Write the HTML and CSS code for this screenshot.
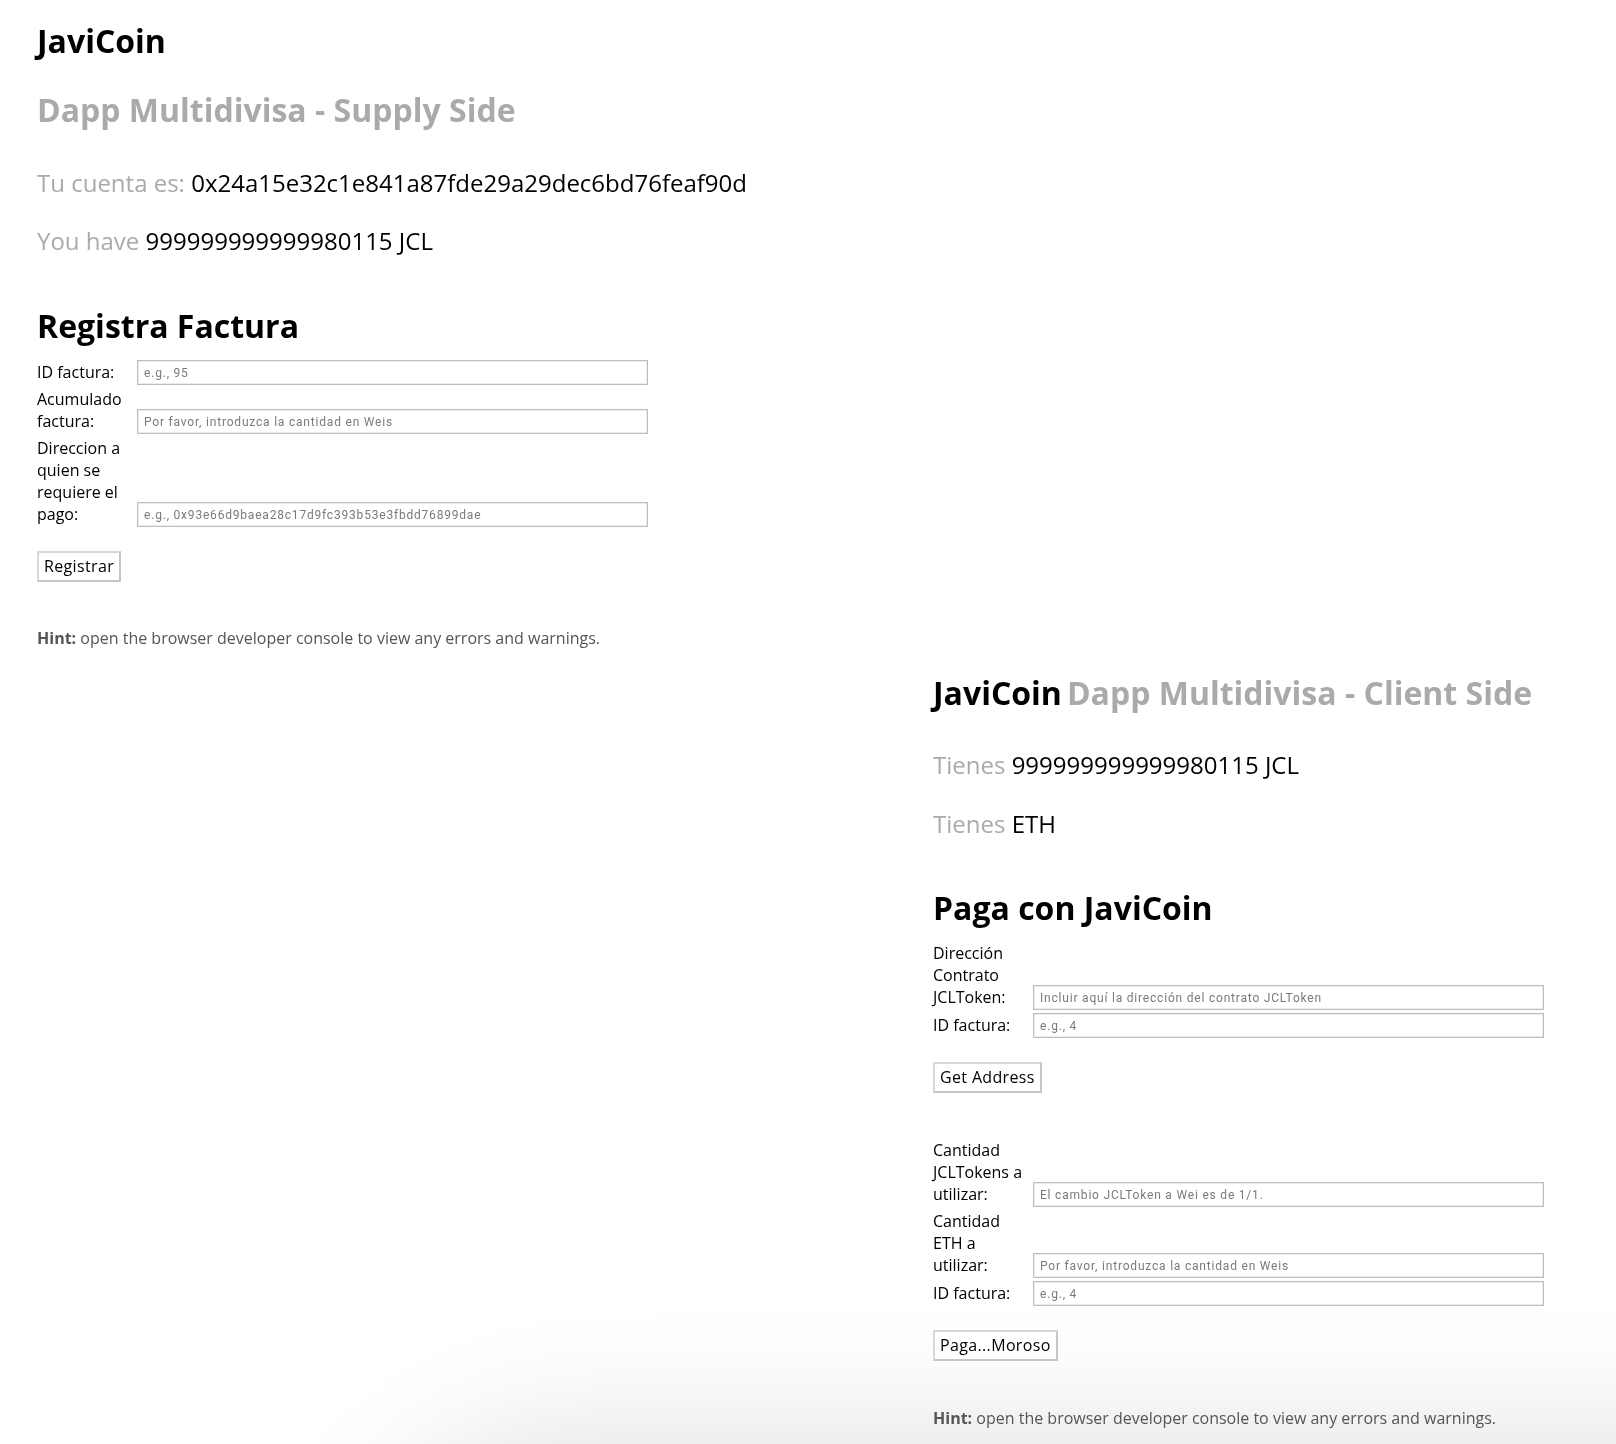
FILE: index.html
```html
<!DOCTYPE html>
<html lang="es">
<head>
<meta charset="utf-8">
<title>JaviCoin</title>
<link rel="stylesheet" href="styles.css">
</head>
<body>
<div class="page">
  <section class="supply">
    <h1 class="brand">JaviCoin</h1>
    <h2 class="subtitle">Dapp Multidivisa - Supply Side</h2>
    <p class="info info-first"><span class="muted">Tu cuenta es:</span> <span>0x24a15e32c1e841a87fde29a29dec6bd76feaf90d</span></p>
    <p class="info info-second"><span class="muted">You have</span> <span>999999999999980115</span> JCL</p>

    <h2 class="section-title">Registra Factura</h2>
    <form class="form-grid">
      <label class="field-label" for="f1">ID factura:</label>
      <input class="field" id="f1" type="text" placeholder="e.g., 95">
      <label class="field-label" for="f2">Acumulado factura:</label>
      <input class="field" id="f2" type="text" placeholder="Por favor, introduzca la cantidad en Weis">
      <label class="field-label" for="f3">Direccion a quien se requiere el pago:</label>
      <input class="field" id="f3" type="text" placeholder="e.g., 0x93e66d9baea28c17d9fc393b53e3fbdd76899dae">
    </form>
    <button class="btn" type="button">Registrar</button>

    <p class="hint"><strong>Hint:</strong> open the browser developer console to view any errors and warnings.</p>
  </section>

  <section class="client">
    <h1 class="brand"><span>JaviCoin</span><span class="brand-sub">Dapp Multidivisa - Client Side</span></h1>
    <p class="info info-first-client"><span class="muted">Tienes</span> <span>999999999999980115</span> JCL</p>
    <p class="info info-client"><span class="muted">Tienes</span> <span></span>ETH</p>

    <h2 class="section-title section-title-client">Paga con JaviCoin</h2>
    <form class="form-grid form-first-client">
      <label class="field-label" for="c1">Dirección Contrato JCLToken:</label>
      <input class="field" id="c1" type="text" placeholder="Incluir aquí la dirección del contrato JCLToken">
      <label class="field-label" for="c2">ID factura:</label>
      <input class="field" id="c2" type="text" placeholder="e.g., 4">
    </form>
    <button class="btn" type="button">Get Address</button>

    <form class="form-grid form-second">
      <label class="field-label" for="c3">Cantidad JCLTokens a utilizar:</label>
      <input class="field" id="c3" type="text" placeholder="El cambio JCLToken a Wei es de 1/1.">
      <label class="field-label" for="c4">Cantidad ETH a utilizar:</label>
      <input class="field" id="c4" type="text" placeholder="Por favor, introduzca la cantidad en Weis">
      <label class="field-label" for="c5">ID factura:</label>
      <input class="field" id="c5" type="text" placeholder="e.g., 4">
    </form>
    <button class="btn" type="button">Paga...Moroso</button>

    <p class="hint hint-client"><strong>Hint:</strong> open the browser developer console to view any errors and warnings.</p>
  </section>
</div>
<div class="shade-clip"><div class="bottom-shade"></div></div>
</body>
</html>
```

FILE: styles.css
```css
html, body {
  margin: 0;
  padding: 0;
  background: #ffffff;
}

body {
  font-family: "Open Sans", "Liberation Sans", sans-serif;
  color: #000;
  overflow: hidden;
  height: 1444px;
  position: relative;
}

.page {
  padding-left: 37px;
  position: relative;
  z-index: 1;
}

.supply {
  width: 640px;
}

.client {
  margin-left: 896px;
  width: 660px;
}

.brand {
  font-size: 32px;
  line-height: 40px;
  font-weight: 700;
  margin: 0;
  padding-top: 21px;
  white-space: nowrap;
}

.client .brand {
  padding-top: 24px;
  display: flex;
  gap: 5px;
}

.brand-sub {
  color: #aaaaaa;
}

.subtitle {
  font-size: 32px;
  line-height: 40px;
  font-weight: 700;
  color: #aaaaaa;
  margin: 29px 0 0;
}

.info {
  font-size: 24px;
  line-height: 30px;
  font-weight: 400;
  margin: 27px 0 0;
  white-space: nowrap;
}

.info-first {
  margin-top: 38px;
}

.info-second {
  margin-top: 28px;
}

.info-first-client {
  margin-top: 37px;
}

.info-client {
  margin-top: 29px;
}

.muted {
  color: #aaaaaa;
  font-weight: 400;
}

.section-title {
  font-size: 32px;
  line-height: 40px;
  font-weight: 700;
  margin: 50px 0 0;
}

.section-title-client {
  margin-top: 49px;
}

.form-grid {
  display: grid;
  grid-template-columns: 92px 511px;
  column-gap: 8px;
  row-gap: 3px;
  align-items: end;
  margin: 14px 0 0;
}

.form-first-client {
  margin-top: 14px;
}

.form-second {
  margin-top: 46px;
}

.field-label {
  font-size: 16px;
  line-height: 22px;
  padding-bottom: 2px;
}

.field {
  box-sizing: border-box;
  width: 511px;
  height: 25px;
  margin: 0;
  padding: 0 6px;
  border: 1px solid #bdbdbd;
  box-shadow: inset 0 0 0 1px #ececec;
  background: #fff;
  font-family: "Roboto", "Liberation Sans", sans-serif;
  font-size: 12px;
  letter-spacing: 0.8px;
  color: #333;
  outline: none;
}

.field::placeholder {
  color: #7a7a7a;
}

.btn {
  display: block;
  margin: 24px 0 0;
  height: 31px;
  padding: 0 5px;
  background: #fff;
  border: 2px solid #c6c6c6;
  border-top-color: #d8d8d8;
  border-left-color: #d8d8d8;
  font-family: "Open Sans", "Liberation Sans", sans-serif;
  font-size: 16px;
  letter-spacing: 0.35px;
  line-height: 23px;
  color: #000;
  cursor: pointer;
}

.hint {
  font-size: 16px;
  line-height: 22px;
  color: #555;
  margin: 45px 0 0;
}

.hint-client {
  margin-top: 46px;
}

.hint strong {
  font-weight: 700;
}

.shade-clip {
  position: fixed;
  inset: 0;
  overflow: hidden;
  pointer-events: none;
  z-index: 0;
}

.bottom-shade {
  position: absolute;
  left: 380px;
  right: -300px;
  top: 1470px;
  height: 200px;
  border-radius: 240px 0 0 0;
  box-shadow: 0 0 130px 40px rgba(0, 0, 0, 0.12);
  background: #e6e6e6;
}
```
